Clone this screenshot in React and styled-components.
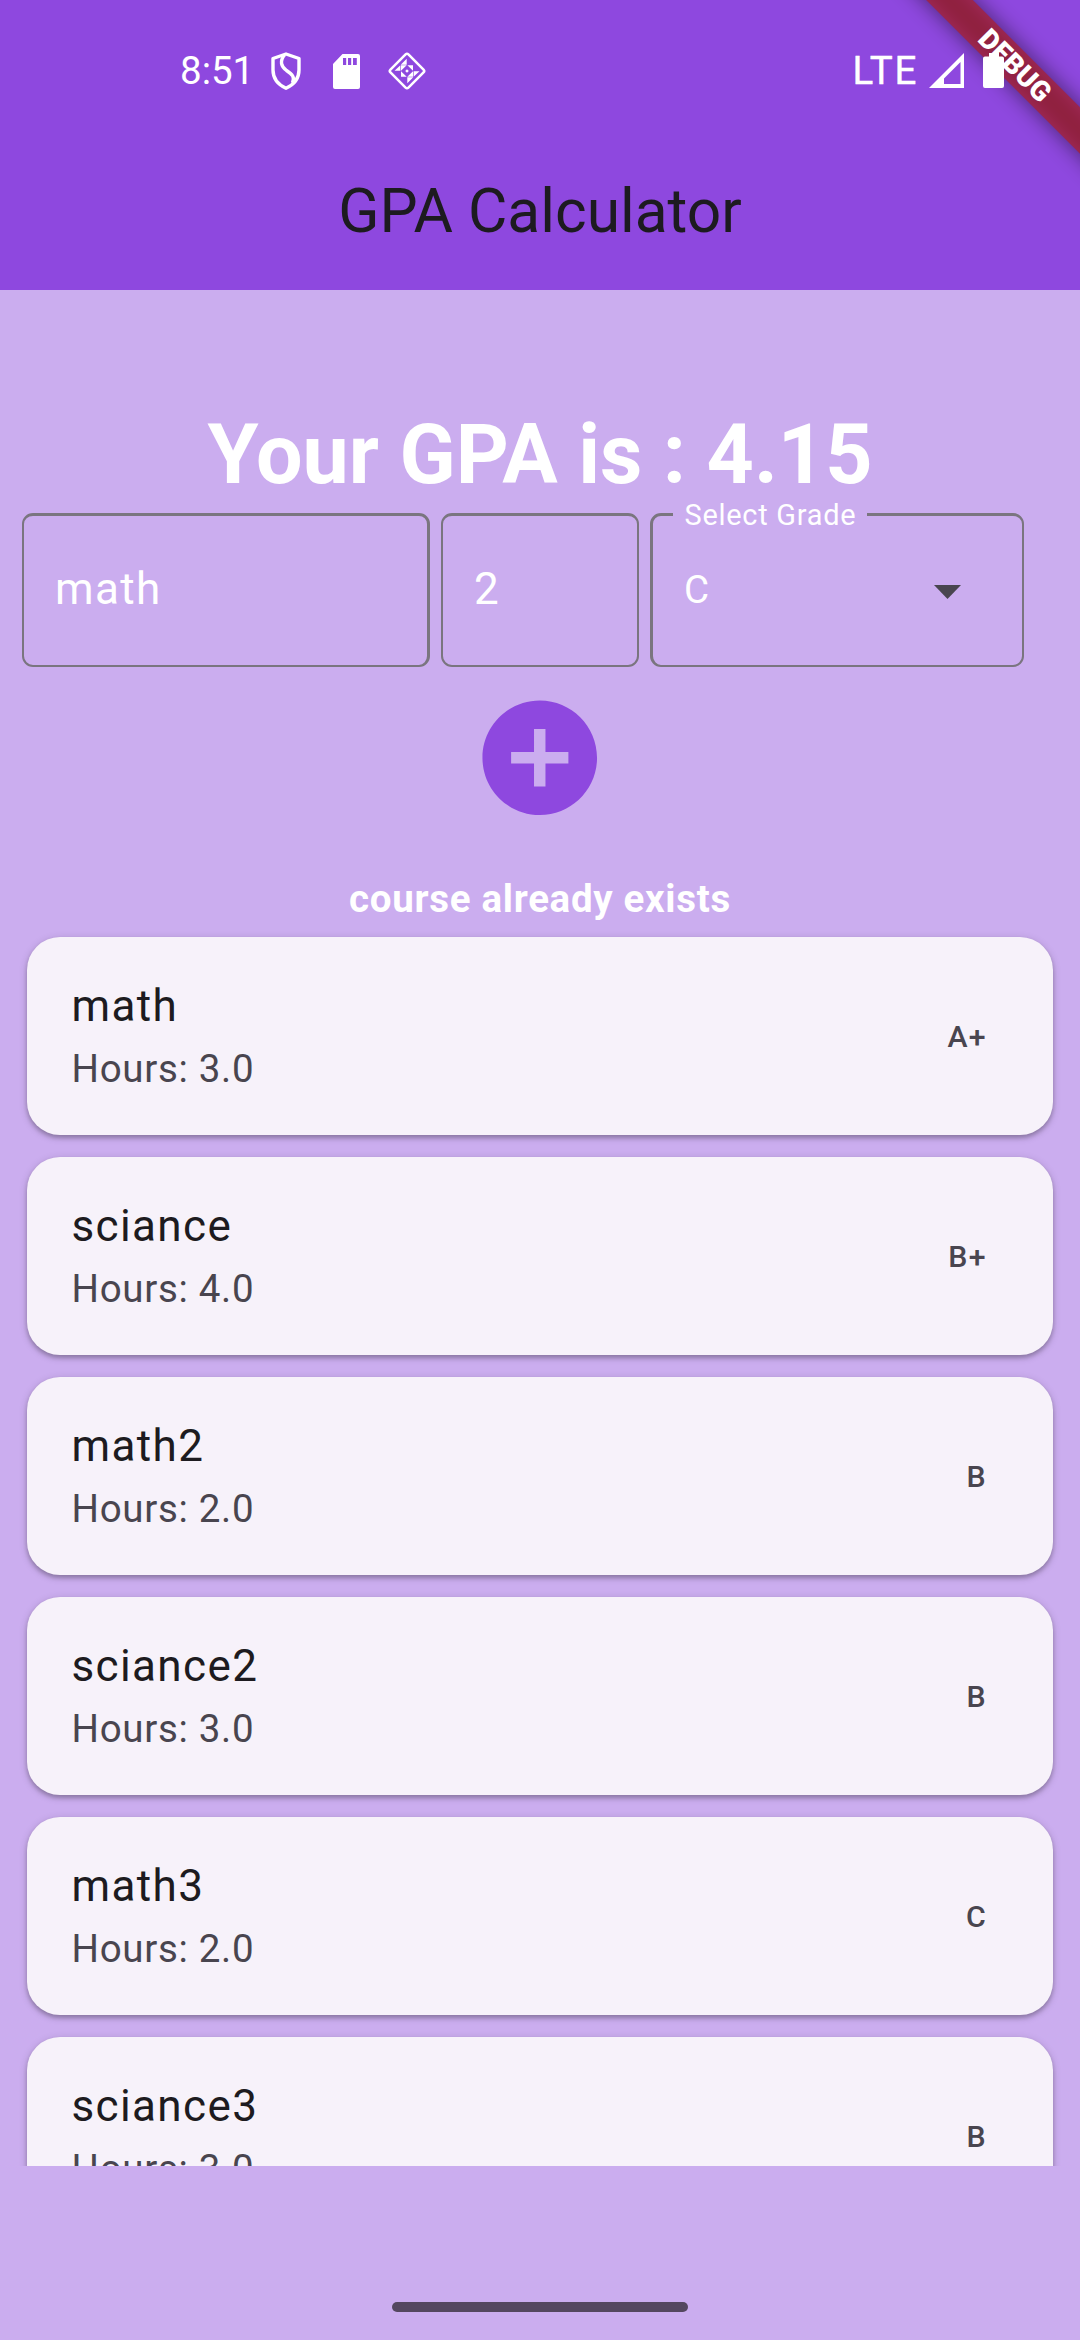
import React from "react";
import styled, { createGlobalStyle } from "styled-components";

const GlobalStyle = createGlobalStyle`
  * { box-sizing: border-box; }
  body { margin: 0; }
`;

const Screen = styled.div`
  position: relative;
  width: 1080px;
  height: 2340px;
  display: flex;
  flex-direction: column;
  overflow: hidden;
  background: #cbadef;
  color: #fff;
  font-family: Roboto, "Liberation Sans", sans-serif;
`;

const Header = styled.header`
  height: 290px;
  flex: none;
  display: flex;
  flex-direction: column;
  background: #8e48df;
`;

const StatusBar = styled.div`
  position: relative;
  z-index: 2;
  height: 136px;
  padding: 6px 76px 0 180px;
  display: flex;
  justify-content: space-between;
  align-items: center;
`;

const StatusGroup = styled.div`
  display: flex;
  align-items: center;
`;

const StatusText = styled.span`
  width: ${(p) => p.$width}px;
  font-size: 38.5px;
  line-height: 46px;
  font-weight: 400;
  letter-spacing: ${(p) => p.$spacing || 0}px;
  -webkit-text-stroke: ${(p) => p.$stroke || 0}px #fff;
  white-space: nowrap;
`;

const Glyph = styled.svg`
  display: block;
  flex: none;
  width: ${(p) => p.$w}px;
  height: ${(p) => p.$h || p.$w}px;
  margin-left: ${(p) => p.$ml || 0}px;
  margin-top: ${(p) => p.$mt || 0}px;
`;

const TitleBar = styled.div`
  flex: 1;
  display: flex;
  align-items: center;
  justify-content: center;
`;

const Title = styled.h1`
  margin: 0 0 4px;
  font-size: 60.5px;
  line-height: 77px;
  font-weight: 400;
  color: #1d1b20;
`;

const RibbonLayer = styled.div`
  position: absolute;
  z-index: 1;
  top: 0;
  right: 0;
  width: 240px;
  height: 240px;
  overflow: hidden;
`;

const Ribbon = styled.div`
  position: absolute;
  left: -45.5px;
  top: 49px;
  width: 440px;
  height: 33px;
  transform: rotate(45deg);
  text-align: center;
  font-size: 28px;
  line-height: 33px;
  font-weight: 900;

  &::before,
  &::after {
    content: "";
    position: absolute;
    z-index: -1;
    inset: 0;
  }
  &::before {
    background: rgba(0, 0, 0, 0.5);
    filter: blur(11px);
  }
  &::after {
    background: rgba(183, 28, 28, 0.627);
  }
`;

const Gpa = styled.h2`
  margin: 107px 0 0;
  height: 116px;
  flex: none;
  font-size: 82.5px;
  line-height: 116px;
  font-weight: 700;
  text-align: center;
  white-space: nowrap;
`;

const Form = styled.div`
  flex: none;
  display: grid;
  grid-template-columns: 408px 198px 374px;
  gap: 11px;
  height: 154px;
  padding-left: 22px;
`;

const Field = styled.div`
  position: relative;
  display: flex;
  align-items: center;
  justify-content: space-between;
  border: 2px solid #7a757f;
  border-width: 3px ${(p) => p.$right || 2}px 2px ${(p) => p.$left || 2}px;
  border-radius: 11px;
  padding: 0 61px 3px 31px;
  font-size: ${(p) => p.$size || 44}px;
  letter-spacing: ${(p) => p.$spacing ?? 1.375}px;
`;

const FloatingLabel = styled.span`
  position: absolute;
  left: 20px;
  top: -18px;
  width: 194px;
  height: 34px;
  padding-left: 11.5px;
  background: #cbadef;
  font-size: 28.9px;
  line-height: 34px;
  letter-spacing: 0.75px;
  white-space: nowrap;
`;

const AddButton = styled.button`
  flex: none;
  align-self: center;
  margin: 22px 0 0;
  padding: 0;
  border: 0;
  background: none;
`;

const Message = styled.p`
  flex: none;
  margin: 44.5px 0 0;
  height: 55px;
  font-size: 38.5px;
  line-height: 55px;
  font-weight: 700;
  letter-spacing: 0.69px;
  text-align: center;
`;

const List = styled.div`
  flex: none;
  height: 1240px;
  padding: 11px 27px 0;
  overflow: hidden;
  display: flex;
  flex-direction: column;
  gap: 22px;
`;

const Card = styled.article`
  flex: none;
  height: 198px;
  padding: 0 66px 0 44.5px;
  display: flex;
  align-items: center;
  justify-content: space-between;
  border-radius: 33px;
  background: #f7f2fa;
  box-shadow: 0 3px 4px rgba(0, 0, 0, 0.22), 0 2px 8px rgba(0, 0, 0, 0.16);
`;

const CourseName = styled.div`
  font-size: 44px;
  line-height: 66px;
  letter-spacing: 1.375px;
  color: #1d1b20;
`;

const Hours = styled.div`
  font-size: 38.5px;
  line-height: 60px;
  letter-spacing: 0.69px;
  color: #49454f;
`;

const Grade = styled.div`
  font-size: 30.25px;
  font-weight: 500;
  letter-spacing: 1.375px;
  color: #49454f;
`;

const NavArea = styled.footer`
  flex: 1;
  display: flex;
  justify-content: center;
  align-items: flex-end;
  padding-bottom: 28px;
`;

const NavHandle = styled.div`
  width: 296px;
  height: 10px;
  border-radius: 5px;
  background: #54475f;
`;

const courses = [
  ["math", "3.0", "A+"],
  ["sciance", "4.0", "B+"],
  ["math2", "2.0", "B"],
  ["sciance2", "3.0", "B"],
  ["math3", "2.0", "C"],
  ["sciance3", "3.0", "B"],
];

const ShieldIcon = () => (
  <Glyph $w={32} $h={38} $ml={10} viewBox="0 0 32 38" fill="none" stroke="#fff" strokeWidth="3.4" strokeLinejoin="round">
    <path d="M16 2 29 6.5V18C29 27 23 33 16 36.2 9 33 3 27 3 18V6.5Z" />
    <path d="M14.5 3C9.500 9 11 14.500 16.500 18.500 22.500 22.500 25 25 22.500 31" />
  </Glyph>
);

const SdIcon = () => (
  <Glyph $w={27} $h={35} $ml={31} viewBox="0 0 27 35">
    <path fill="#fff" fillRule="evenodd" d="M9.500 0H25q2 0 2 2v31q0 2-2 2H2q-2 0-2-2V10ZM10 4v7h3.200V4Zm5 0v7h3.200V4Zm5 0v7h3.800V4Z" />
  </Glyph>
);

const DiamondIcon = () => (
  <Glyph $w={40} $ml={27} viewBox="0 0 40 40">
    <rect x="7.300" y="7.300" width="25.400" height="25.400" rx="2" fill="none" stroke="#fff" strokeWidth="2.500" transform="rotate(45 20 20)" />
    <path
      fill="#fff"
      d="M19.700 7.700v6H13.700ZM13.400 14.200v5.500H7.500ZM20.300 32.300v-6H26.300ZM26.600 25.800v-5.500H32.500ZM14 14.200h5.700L14 19.700ZM26 14.200v5.500L20.400 14.200ZM14 25.800v-5.500L19.700 25.800ZM26 25.800h-5.700L26 20.300Z"
    />
    <path fill="#fff" d="M20 18.200 21.800 20 20 21.800 18.200 20Z" />
  </Glyph>
);

const SignalIcon = () => (
  <Glyph $w={35} $mt={-1} viewBox="0 0 35 35">
    <path fill="#fff" fillRule="evenodd" d="M0 35 35 0V35ZM15 31H31.500V9L15 25.500Z" />
  </Glyph>
);

const BatteryIcon = () => (
  <Glyph $w={21} $h={35} $ml={19} $mt={-2} viewBox="0 0 21 35">
    <path fill="#fff" d="M6 0h10v3.500h3q2 0 2 2V33q0 2-2 2H2q-2 0-2-2V5.500q0-2 2-2h4Z" />
  </Glyph>
);

export default function App() {
  return (
    <>
      <GlobalStyle />
      <Screen>
        <Header>
          <StatusBar>
            <StatusGroup>
              <StatusText $width={80}>8:51</StatusText>
              <ShieldIcon />
              <SdIcon />
              <DiamondIcon />
            </StatusGroup>
            <StatusGroup>
              <StatusText $width={76.5} $spacing={1.7} $stroke={0.4}>LTE</StatusText>
              <SignalIcon />
              <BatteryIcon />
            </StatusGroup>
          </StatusBar>
          <TitleBar>
            <Title>GPA Calculator</Title>
          </TitleBar>
        </Header>
        <Gpa>Your GPA is : 4.15</Gpa>
        <Form>
          <Field $right={3}>math</Field>
          <Field>2</Field>
          <Field $left={3} $size={38.5} $spacing={0}>
            <FloatingLabel>Select Grade</FloatingLabel>
            C
            <Glyph $w={27} $h={14} $mt={6} viewBox="0 0 27 14">
              <path fill="#49454f" d="M0 0h27L13.500 14Z" />
            </Glyph>
          </Field>
        </Form>
        <AddButton aria-label="Add course">
          <Glyph $w={137.5} viewBox="0 0 24 24">
            <path
              fill="#8e48df"
              d="M12 2C6.480 2 2 6.480 2 12s4.480 10 10 10 10-4.480 10-10S17.520 2 12 2zm5 11h-4v4h-2v-4H7v-2h4V7h2v4h4v2z"
            />
          </Glyph>
        </AddButton>
        <Message>course already exists</Message>
        <List>
          {courses.map(([name, hours, grade]) => (
            <Card key={name}>
              <div>
                <CourseName>{name}</CourseName>
                <Hours>Hours: {hours}</Hours>
              </div>
              <Grade>{grade}</Grade>
            </Card>
          ))}
        </List>
        <NavArea>
          <NavHandle />
        </NavArea>
        <RibbonLayer>
          <Ribbon>DEBUG</Ribbon>
        </RibbonLayer>
      </Screen>
    </>
  );
}
